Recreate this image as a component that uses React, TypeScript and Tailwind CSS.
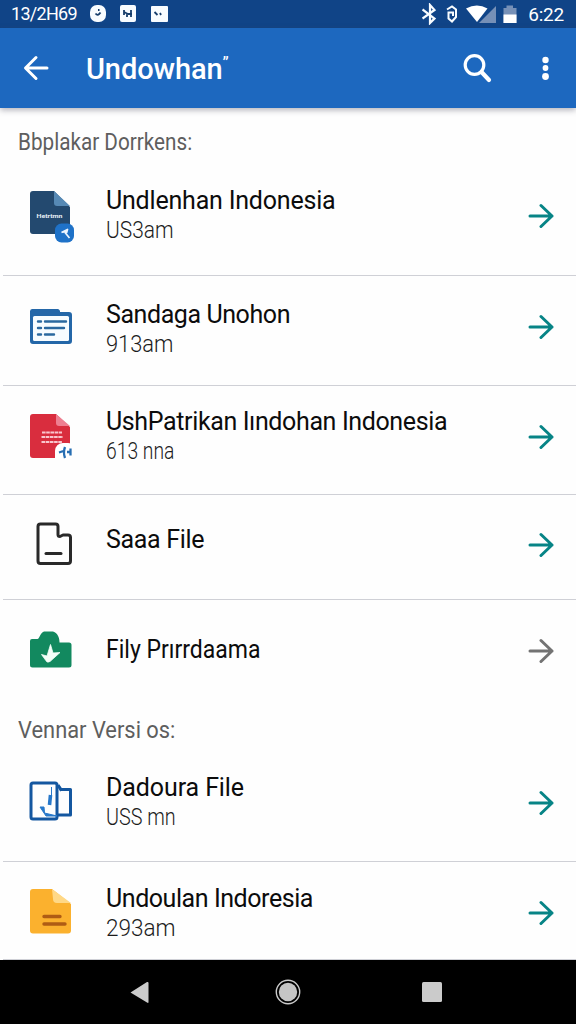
import type { ReactNode } from "react";

type Item = {
  title: string;
  titleClass: string;
  sub?: string;
  subClass?: string;
  row: string;
  icon: ReactNode;
  iconPad: string;
  textPad: string;
  arrowPad: string;
  muted?: boolean;
};

function Arrow({ muted }: { muted?: boolean }) {
  return (
    <svg width="26" height="26" viewBox="0 0 26 26" fill="none" stroke={muted ? "#737373" : "#078486"} strokeWidth="3" strokeLinecap="round" strokeLinejoin="round">
      <path d="M2 13H24M13 2.500L24 13L13 23.500" />
    </svg>
  );
}

const navyFile = (
  <svg width="46" height="54" viewBox="0 0 46 54">
    <path d="M4 1H25L41 17V41a3 3 0 0 1-3 3H4a3 3 0 0 1-3-3V4a3 3 0 0 1 3-3Z" fill="#23496f" />
    <path d="M25 1L41 16H28a3 3 0 0 1-3-3Z" fill="#5689b5" />
    <text x="7.500" y="27.500" fontSize="5.500" fontWeight="700" fontFamily="Roboto, sans-serif" fill="#e6eef5" textLength="26" lengthAdjust="spacingAndGlyphs">Hetrtmn</text>
    <rect x="26" y="33.500" width="19" height="19" rx="6.500" fill="#1f72c8" />
    <path d="M32.500 42.500L38.500 39.500L37.500 43M36 42.500L40.500 48" fill="#eef6ff" stroke="#eef6ff" strokeWidth="1.700" strokeLinejoin="round" />
  </svg>
);

const folder = (
  <svg width="44" height="38" viewBox="0 0 44 38">
    <path d="M3 1H28.500a2.500 2.500 0 0 1 2.500 3H40a3 3 0 0 1 3 3V33a3 3 0 0 1-3 3H4a3 3 0 0 1-3-3V3.500a2.500 2.500 0 0 1 2-2.500Z" fill="#2467a8" />
    <rect x="4" y="8" width="36" height="25" rx="1.500" fill="#f7fcff" />
    <path d="M9 13.500H12M16 13.500H37M9 20H12M16 20H35M9 26.500H12M16 26.500H25" stroke="#2a689f" strokeWidth="2.400" strokeLinecap="round" />
  </svg>
);

const redFile = (
  <svg width="44" height="48" viewBox="0 0 44 48">
    <path d="M4 1H27L41 14V42a3 3 0 0 1-3 3H4a3 3 0 0 1-3-3V4a3 3 0 0 1 3-3Z" fill="#d92d3e" />
    <path d="M27 1L41 13H30a3 3 0 0 1-3-3Z" fill="#ee7f91" />
    <path d="M13 19.500H33M12.500 24H34M12.500 29H33" stroke="#f9c6cd" strokeWidth="1.800" strokeDasharray="3.600 0.600" />
    <path d="M26 46V38a8 8 0 0 1 8-8h5a4 4 0 0 1 4 4v12Z" fill="#fff" />
    <path d="M30 39.500L36 37.500M36 34C34.500 38 34.500 41 36 45M38 39H42M41.500 35.500V42.500" stroke="#276eb2" strokeWidth="2.300" fill="none" />
  </svg>
);

const outlineFile = (
  <svg width="37" height="44" viewBox="0 0 37 44" fill="none" stroke="#292929" strokeWidth="3" strokeLinejoin="round" strokeLinecap="round">
    <path d="M4.500 2H19.500a2.500 2.500 0 0 1 2.500 2.500V12.500a2 2 0 0 0 2 2L27 13H32a2.500 2.500 0 0 1 2.500 2.500V39a2.500 2.500 0 0 1-2.500 2.500H4.500A2.500 2.500 0 0 1 2 39V4.500A2.500 2.500 0 0 1 4.500 2Z" />
    <path d="M10 31.500H25" />
  </svg>
);

const greenCase = (
  <svg width="44" height="40" viewBox="0 0 44 40">
    <path d="M3 9H8.500C10.500 9 11 3 15 1.500H24C29 3 30.500 8 30.500 12.500H40a2.500 2.500 0 0 1 2.500 2.500V35a2.500 2.500 0 0 1-2.500 2.500H3.500A2.500 2.500 0 0 1 1 35V11a2 2 0 0 1 2-2Z" fill="#12895f" />
    <path d="M21.500 14.500L24 23L31 22.500L21 31.500Q18 33.500 16.500 30L12.500 24.500L18 26Z" fill="#f3fff9" stroke="#f3fff9" strokeWidth="0.800" strokeLinejoin="round" />
  </svg>
);

const bluePages = (
  <svg width="44" height="42" viewBox="0 0 44 42" fill="none" stroke="#1457a0" strokeWidth="3" strokeLinejoin="round">
    <rect x="2" y="2" width="26" height="36" rx="2" />
    <path d="M29 4L32 8.500H41.500V34H29" />
    <path d="M30 6L32 10" strokeWidth="2" />
    <path d="M22.500 6V16" strokeWidth="1" stroke="#2778ca" />
    <path d="M21.500 14L20.500 24" stroke="#2778ca" strokeWidth="3.600" />
    <path d="M11 26H15L15.500 32L28 35H17L11 26Z" fill="#2778ca" stroke="#2778ca" strokeWidth="1" />
  </svg>
);

const yellowFile = (
  <svg width="44" height="48" viewBox="0 0 44 48">
    <path d="M4 1H23L42 16V42.500a3 3 0 0 1-3 3H4a3 3 0 0 1-3-3V4a3 3 0 0 1 3-3Z" fill="#fbb12e" />
    <path d="M23 1L42 15H28a4 4 0 0 1-4-4Z" fill="#ffd886" />
    <path d="M15 28.500H31M15 36H36" stroke="#af5c14" strokeWidth="3.400" strokeLinecap="round" />
  </svg>
);

const first: Item[] = [
  { title: "Undlenhan Indonesia", titleClass: "tracking-[-0.2px]", sub: "US3am", subClass: "scale-x-[0.91]", row: "h-[116px] border-b", icon: navyFile, iconPad: "pt-[30px] pl-[26px]", textPad: "pt-[26px]", arrowPad: "pt-[43px]" },
  { title: "Sandaga Unohon", titleClass: "tracking-[-0.42px]", sub: "913am", subClass: "scale-x-[0.95]", row: "h-[110px] border-b", icon: folder, iconPad: "pt-[32px] pl-[26px]", textPad: "pt-[24px]", arrowPad: "pt-[38px]" },
  { title: "UshPatrikan Iındohan Indonesia", titleClass: "tracking-[-0.37px]", sub: "613 nna", subClass: "scale-x-[0.84]", row: "h-[109px] border-b", icon: redFile, iconPad: "pt-[27px] pl-[26px]", textPad: "pt-[21px]", arrowPad: "pt-[38px]" },
  { title: "Saaa File", titleClass: "tracking-[-0.33px]", row: "h-[105px] border-b", icon: outlineFile, iconPad: "pt-[27px] pl-[33px]", textPad: "pt-[30px]", arrowPad: "pt-[37px]" },
  { title: "Fily Prırrdaama", titleClass: "scale-x-[0.92]", row: "h-[106px]", icon: greenCase, iconPad: "pt-[30px] pl-[26px]", textPad: "pt-[35px]", arrowPad: "pt-[38px]", muted: true },
];

const second: Item[] = [
  { title: "Dadoura File", titleClass: "tracking-[-0.1px]", sub: "USS mn", subClass: "scale-x-[0.86]", row: "h-[106px] border-b", icon: bluePages, iconPad: "pt-[25px] pl-[26px]", textPad: "pt-[17px]", arrowPad: "pt-[34px]" },
  { title: "Undoulan Indoresia", titleClass: "tracking-[-0.44px]", sub: "293am", subClass: "scale-x-[0.98]", row: "h-[98px] border-b", icon: yellowFile, iconPad: "pt-[26px] pl-[26px]", textPad: "pt-[22px]", arrowPad: "pt-[38px]" },
];

function Row({ item }: { item: Item }) {
  return (
    <li className={`ml-[3px] flex items-start border-[#cfd0d6] ${item.row}`}>
      <div className={`w-[103px] shrink-0 ${item.iconPad}`}>{item.icon}</div>
      <div className={`flex-1 whitespace-nowrap ${item.textPad}`}>
        <div className={`w-max origin-left text-[25px] leading-[30px] text-[#0c0c0c] ${item.titleClass}`}>
          {item.title}
        </div>
        {item.sub && (
          <div className={`w-max origin-left text-[23px] leading-[30px] font-light text-[#1c1c1c] ${item.subClass}`}>
            {item.sub}
          </div>
        )}
      </div>
      <div className={`mr-[22px] ${item.arrowPad}`}>
        <Arrow muted={item.muted} />
      </div>
    </li>
  );
}

function StatusBar() {
  return (
    <div className="flex h-[28px] shrink-0 items-center bg-[#104487] pr-[12px] pl-[11px] text-white">
      <span className="w-[79px] text-[18px] leading-none tracking-[-0.7px] whitespace-nowrap">13/2H69</span>
      <svg width="79" height="18" viewBox="0 0 79 18" fill="#f8fcff">
        <rect x="0" y="0" width="16" height="17" rx="7" />
        <path d="M5.500 8.500Q8 11.500 10.500 7.500M9.500 5H8" stroke="#163d6b" strokeWidth="1.800" fill="none" />
        <rect x="30" y="0" width="16" height="17" rx="2" />
        <path d="M34 5V10M34 7L38 9M37 8V12M41 5V12M38 9H42" stroke="#163d6b" strokeWidth="1.800" fill="none" />
        <rect x="61" y="1" width="17" height="16" rx="1" />
        <path d="M64.500 7L67.500 10M70 8L71 10" stroke="#163d6b" strokeWidth="1.800" />
      </svg>
      <svg className="ml-auto" width="96" height="22" viewBox="0 0 96 22" fill="none" stroke="#f8fcff" strokeWidth="2.200">
        <path d="M0.500 6.500L12.500 15.500L8 20V2L12.500 7L0.500 15.500" />
        <path d="M25 6.500L30 3.500L34 6.500V14L30 18.500L26.500 15.500V9.500H31V13" strokeWidth="2" />
        <path d="M44 5.500Q55 -0.500 65.500 5.500L55 19Z" fill="#fff" stroke="none" />
        <path d="M74 3V20H57Z" fill="#7690b7" stroke="none" />
        <path d="M81.500 5H84.500V2.500H91V5H94.500V20H81.500Z" fill="#7690b7" stroke="none" />
        <path d="M81.500 11.500H94.500V20H81.500Z" fill="#fff" stroke="none" />
      </svg>
      <span className="ml-[10px] text-[19px] leading-none tracking-[-0.2px] whitespace-nowrap">6:22</span>
    </div>
  );
}

export default function App() {
  return (
    <div className="flex h-[1024px] w-[576px] flex-col overflow-hidden bg-[#fefefe] font-['Roboto','Liberation_Sans',sans-serif]">
      <StatusBar />
      <header className="z-10 flex h-[80px] shrink-0 items-center bg-[#1d68bf] pr-[22px] pl-[23px] text-white shadow-[0_2px_6px_rgba(60,60,80,0.4)]">
        <svg width="26" height="26" viewBox="0 0 26 26" fill="none" stroke="currentColor" strokeWidth="3" strokeLinecap="round" strokeLinejoin="round">
          <path d="M24 13H3M13 2.500L2.500 13L13 23.500" />
        </svg>
        <h1 className="ml-[37px] flex pt-[2px] text-[29px] leading-[34px] font-medium tracking-[-0.1px]">
          <span>Undowhan</span>
          <span className="pt-[3px] text-[16px] leading-[16px]">”</span>
        </h1>
        <svg className="ml-auto" width="30" height="30" viewBox="0 0 30 30" fill="none" stroke="currentColor" strokeWidth="3.200" strokeLinecap="round">
          <circle cx="12.500" cy="12" r="9.300" />
          <path d="M19.500 19L27 27" strokeWidth="4.200" />
        </svg>
        <svg className="ml-[44px]" width="18" height="26" viewBox="0 0 18 26" fill="currentColor">
          <circle cx="9.500" cy="5" r="3.200" />
          <circle cx="9.500" cy="13" r="2.900" />
          <circle cx="9.500" cy="21.500" r="3.400" />
        </svg>
      </header>
      <main className="h-[852px] shrink-0">
        <h2 className="h-[52px] w-max origin-left scale-x-[0.9] pt-[21px] pl-[20px] text-[23px] leading-[28px] text-[#5e5e5e]">
          Bbplakar Dorrkens:
        </h2>
        <ul>{first.map((item) => <Row key={item.title} item={item} />)}</ul>
        <h2 className="h-[50px] w-max origin-left scale-x-[0.95] pt-[11px] pl-[19px] text-[23px] leading-[28px] text-[#5e5e5e]">
          Vennar Versi os:
        </h2>
        <ul>{second.map((item) => <Row key={item.title} item={item} />)}</ul>
      </main>
      <nav className="flex h-[64px] shrink-0 items-center bg-black pl-[130px]">
        <svg width="20" height="24" viewBox="0 0 20 24" fill="#cbcbcb">
          <path d="M0.500 12.500L17 2Q18.500 1.500 18.500 3V22Q18.500 23.500 17 22.500Z" />
        </svg>
        <svg className="ml-[125px]" width="26" height="26" viewBox="0 0 26 26">
          <circle cx="13" cy="13" r="11.700" fill="none" stroke="#cbcbcb" strokeWidth="1.400" />
          <circle cx="13" cy="13" r="9.200" fill="#c5c5c5" />
        </svg>
        <span className="ml-[121px] size-[20px] rounded-[1.500px] bg-[#cbcbcb]" />
      </nav>
    </div>
  );
}
